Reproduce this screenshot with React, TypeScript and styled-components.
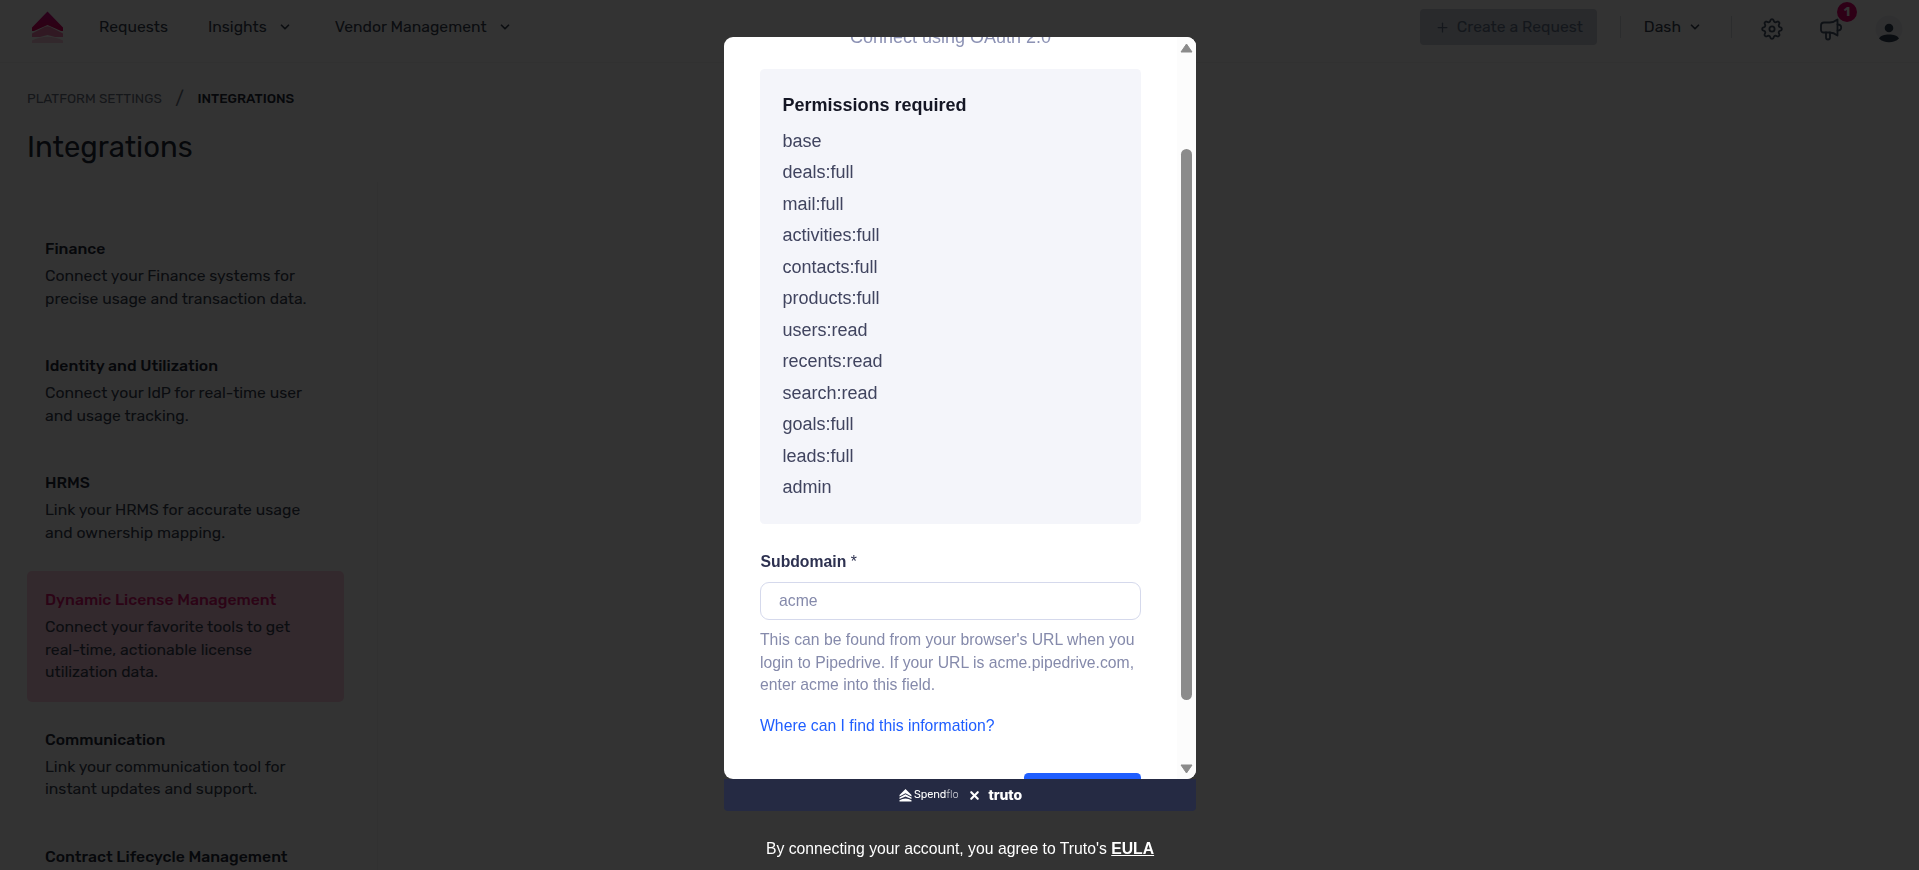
import React from 'react';
import styled, { createGlobalStyle } from 'styled-components';
import { ChevronDown, Plus, X } from 'lucide-react';

const GlobalStyle = createGlobalStyle`
  * {
    box-sizing: border-box;
  }
  body {
    margin: 0;
    background: #fff;
    overflow: hidden;
  }
`;

const Page = styled.div`
  height: 870px;
  overflow: hidden;
  display: flex;
  flex-direction: column;
  font-family: Rubik, Roboto, sans-serif;
  font-size: 15.75px;
  line-height: 22.5px;
  color: #374151;
`;

const TopBar = styled.header`
  flex: none;
  height: 63px;
  padding: 0 16px 8px 31px;
  display: flex;
  align-items: center;
  justify-content: space-between;
  border-bottom: 1px solid #f3f4f6;
`;

const Nav = styled.nav`
  display: flex;
  align-items: center;
`;

const NavItem = styled.div<{ gap: number }>`
  display: flex;
  align-items: center;
  gap: 11px;
  margin-left: ${(props) => props.gap}px;
`;

const Tools = styled.div`
  display: flex;
  align-items: center;
`;

const CreateButton = styled.div`
  display: flex;
  align-items: center;
  gap: 7px;
  width: 177px;
  height: 36px;
  margin-right: 23px;
  padding-left: 15px;
  border-radius: 4px;
  background: #cbd1da;
  color: #64748b;
`;

const Separator = styled.div`
  width: 1px;
  height: 22px;
  background: #d5dae2;
`;

const Workspace = styled.div`
  display: flex;
  align-items: center;
  gap: 7px;
  margin: 0 29px 0 23px;
`;

const ToolIcon = styled.div<{ gap: number }>`
  position: relative;
  display: flex;
  margin-left: ${(props) => props.gap}px;
  padding-top: 4px;
`;

const Badge = styled.span`
  position: absolute;
  left: 18px;
  top: -11px;
  width: 20px;
  height: 20px;
  border-radius: 50%;
  background: #e6006f;
  color: #fff;
  font-size: 13px;
  font-weight: 700;
  line-height: 20px;
  text-align: center;
`;

const Breadcrumb = styled.div`
  display: flex;
  align-items: center;
  gap: 13.5px;
  margin: 24px 0 0 27px;
  font-size: 13.5px;
  color: #6b7280;
  & b {
    font-weight: 500;
    color: #1f2937;
  }
  & i {
    font-style: normal;
    font-size: 18px;
  }
`;

const Title = styled.h1`
  margin: 19px 0 0 27px;
  font-size: 29.25px;
  font-weight: 400;
  line-height: 36px;
  color: #1f2937;
`;

const Sidebar = styled.aside`
  flex: 1;
  width: 378px;
  margin-top: 17.5px;
  padding: 38px 33px 0 27px;
  border-right: 1px solid #f3f4f6;
  display: flex;
  flex-direction: column;
  gap: 9px;
`;

const Category = styled.div<{ $active?: boolean }>`
  flex: none;
  padding: 18px;
  border-radius: 5px;
  background: ${(props) => (props.$active ? '#fccce0' : 'transparent')};
  & h3 {
    margin: 0 0 4.5px;
    font-size: 15.75px;
    font-weight: 500;
    color: ${(props) => (props.$active ? '#dc1470' : '#1f2937')};
  }
  & p {
    margin: 0;
    white-space: pre-line;
  }
`;

const Backdrop = styled.div`
  position: fixed;
  inset: 0;
  padding: 37px 0 0 1px;
  display: flex;
  flex-direction: column;
  align-items: center;
  background: rgba(0, 0, 0, 0.8);
  font-family: 'Liberation Sans', Arial, sans-serif;
  font-size: 15.75px;
  line-height: 22.5px;
`;

const Modal = styled.div`
  width: 472px;
  height: 742px;
  display: flex;
  overflow: hidden;
  border-radius: 9px;
  background: #fff;
`;

const ModalBody = styled.div`
  flex: 1;
  height: 742px;
  padding: 0 36px;
  overflow: hidden;
`;

const Subtitle = styled.div`
  margin: -13px 0 18px;
  font-size: 18px;
  line-height: 27px;
  text-align: center;
  color: #8c92b4;
`;

const Permissions = styled.ul`
  list-style: none;
  margin: 0;
  padding: 22.5px;
  display: flex;
  flex-direction: column;
  gap: 4.5px;
  border-radius: 4.5px;
  background: #f4f5fa;
  font-size: 18px;
  line-height: 27px;
  color: #40445f;
`;

const PermissionsTitle = styled.li`
  margin-bottom: 4.5px;
  font-weight: 700;
  color: #141624;
`;

const Label = styled.div`
  margin: 27px 0 9px;
  padding-left: 0.5px;
  font-weight: 700;
  color: #2d3150;
  & span {
    font-weight: 400;
  }
`;

const Field = styled.div`
  height: 38px;
  padding: 7px 18px;
  border: 1px solid #d5d9ec;
  border-radius: 9px;
  color: #858aab;
`;

const Help = styled.p`
  margin: 9px 0 18px;
  white-space: nowrap;
  color: #858aab;
`;

const HelpLink = styled.a`
  display: block;
  color: #1f5eff;
`;

const Submit = styled.div`
  width: 117px;
  height: 45px;
  margin: 36px 0 0 auto;
  border-radius: 4.5px;
  background: #1f5eff;
`;

const Scrollbar = styled.div`
  width: 19px;
  padding: 6px 0 5px;
  display: flex;
  flex-direction: column;
  align-items: center;
  background: #fcfcfc;
`;

const Thumb = styled.div`
  width: 11px;
  height: 551px;
  margin: 96px 0 auto;
  border-radius: 6px;
  background: #8b8b8b;
`;

const Brands = styled.div`
  width: 472px;
  height: 32px;
  padding-left: 1px;
  display: flex;
  align-items: center;
  justify-content: center;
  border-radius: 0 0 4px 4px;
  background: #252a43;
  color: #fff;
`;

const SpendfloName = styled.span`
  margin: 0 9px 0 2px;
  font-family: Rubik, Lato, sans-serif;
  font-size: 11px;
  letter-spacing: -0.1px;
  & span {
    font-weight: 300;
    opacity: 0.75;
  }
`;

const TrutoName = styled.span`
  margin-left: 8px;
  font-family: Inter, sans-serif;
  font-size: 14px;
  font-weight: 800;
  letter-spacing: -0.1px;
`;

const Terms = styled.div`
  margin-top: 27px;
  color: #fff;
  & a {
    font-weight: 700;
    text-decoration: underline;
  }
`;

const categories = [
  { name: 'Finance', text: 'Connect your Finance systems for\nprecise usage and transaction data.' },
  { name: 'Identity and Utilization', text: 'Connect your IdP for real-time user\nand usage tracking.' },
  { name: 'HRMS', text: 'Link your HRMS for accurate usage\nand ownership mapping.' },
  { name: 'Dynamic License Management', text: 'Connect your favorite tools to get\nreal-time, actionable license\nutilization data.' },
  { name: 'Communication', text: 'Link your communication tool for\ninstant updates and support.' },
  { name: 'Contract Lifecycle Management', text: '' },
];

const permissions = [
  'base', 'deals:full', 'mail:full', 'activities:full', 'contacts:full', 'products:full',
  'users:read', 'recents:read', 'search:read', 'goals:full', 'leads:full', 'admin',
];

function Logo() {
  return (
    <svg width="33" height="33" viewBox="0 0 33 33">
      <defs>
        <linearGradient id="roof" x1="0" y1="0" x2="0" y2="1">
          <stop offset="0" stopColor="#d0108c" />
          <stop offset="1" stopColor="#e6005c" />
        </linearGradient>
      </defs>
      <path d="M16.500 0.500 32 16.500V20H30L16.500 14 3 20H1V16.500Z" fill="url(#roof)" />
      <path d="M1 22.500 14 15.800Q16.500 14.500 19 15.800L32 22.500V26H24L16.500 24 9 26H1Z" fill="#e6005c" opacity=".5" />
      <path d="M1 29.500Q16.500 22 32 29.500V32H1Z" fill="#e6005c" opacity=".22" />
    </svg>
  );
}

// Rounded eight-tooth outline around the centre of a 24px box
const gearPath = Array.from({ length: 96 }, (_, i) => {
  const a = (i / 96) * Math.PI * 2;
  const r = 8.6 + 1.3 * Math.tanh(1.5 * Math.cos(8 * a));
  return `${i ? 'L' : 'M'}${(12 + r * Math.cos(a)).toFixed(2)} ${(12 + r * Math.sin(a)).toFixed(2)}`;
}).join('');

function Gear() {
  return (
    <svg width="24" height="24" viewBox="0 0 24 24" fill="none" stroke="#475569" strokeWidth="1.8" strokeLinejoin="round">
      <path d={`${gearPath}Z`} />
      <circle cx="12" cy="12" r="2.600" />
    </svg>
  );
}

function Megaphone() {
  return (
    <svg width="24" height="24" viewBox="0 0 24 24" fill="none" stroke="#475569" strokeWidth="1.8" strokeLinejoin="round" strokeLinecap="round">
      <path d="M5 5.500h5.500c3 0 5.500-1 8-3v16c-2.500-2-5-3-8-3H4.500a2.500 2.500 0 0 1-2.500-2.500V8.500a3 3 0 0 1 3-3Z" />
      <path d="M18.500 7.500c2.200 0 3.700 1.300 3.700 3s-1.500 3-3.700 3" />
      <path d="M7 15.500V20.500a2 2 0 0 0 4 0v-5" />
    </svg>
  );
}

function Avatar() {
  return (
    <svg width="28" height="28" viewBox="0 0 28 28">
      <circle cx="14" cy="14" r="13.500" fill="#eef1f5" />
      <circle cx="14" cy="13" r="4.300" fill="#334155" />
      <path d="M4 23.500C6 18 22 18 24 23.500 19 28.500 9 28.500 4 23.500Z" fill="#334155" />
    </svg>
  );
}

export default function App() {
  return (
    <>
      <GlobalStyle />
      <Page>
        <TopBar>
          <Nav>
            <Logo />
            <NavItem gap={35}>Requests</NavItem>
            <NavItem gap={40}>
              Insights
              <ChevronDown size={14} strokeWidth={3} />
            </NavItem>
            <NavItem gap={43}>
              Vendor Management
              <ChevronDown size={14} strokeWidth={3} />
            </NavItem>
          </Nav>
          <Tools>
            <CreateButton>
              <Plus size={15} strokeWidth={2} />
              Create a Request
            </CreateButton>
            <Separator />
            <Workspace>
              Dash
              <ChevronDown size={14} strokeWidth={3} />
            </Workspace>
            <Separator />
            <ToolIcon gap={28}><Gear /></ToolIcon>
            <ToolIcon gap={35}>
              <Megaphone />
              <Badge>1</Badge>
            </ToolIcon>
            <ToolIcon gap={32}><Avatar /></ToolIcon>
          </Tools>
        </TopBar>
        <Breadcrumb>
          <span>PLATFORM SETTINGS</span>
          <i>/</i>
          <b>INTEGRATIONS</b>
        </Breadcrumb>
        <Title>Integrations</Title>
        <Sidebar>
          {categories.map((item) => (
            <Category key={item.name} $active={item.name === 'Dynamic License Management'}>
              <h3>{item.name}</h3>
              <p>{item.text}</p>
            </Category>
          ))}
        </Sidebar>
      </Page>
      <Backdrop>
        <Modal>
          <ModalBody>
            <Subtitle>Connect using OAuth 2.0</Subtitle>
            <Permissions>
              <PermissionsTitle>Permissions required</PermissionsTitle>
              {permissions.map((name) => <li key={name}>{name}</li>)}
            </Permissions>
            <Label>
              Subdomain
              {' '}
              <span>*</span>
            </Label>
            <Field>acme</Field>
            <Help>
              This can be found from your browser&apos;s URL when you
              <br />
              login to Pipedrive. If your URL is acme.pipedrive.com,
              <br />
              enter acme into this field.
            </Help>
            <HelpLink>Where can I find this information?</HelpLink>
            <Submit />
          </ModalBody>
          <Scrollbar>
            <svg width="13" height="10" viewBox="0 0 13 10"><path d="M6.500 1 12 9H1Z" fill="#8b8b8b" stroke="#8b8b8b" strokeLinejoin="round" /></svg>
            <Thumb />
            <svg width="13" height="10" viewBox="0 0 13 10"><path d="M6.500 9 12 1H1Z" fill="#8b8b8b" stroke="#8b8b8b" strokeLinejoin="round" /></svg>
          </Scrollbar>
        </Modal>
        <Brands>
          <svg width="13" height="13" viewBox="0 0 13 13" fill="#fff">
            <path d="M6.500 0 12.500 6V7.500L6.500 4.300.5 7.500V6Z" />
            <path d="M6.500 5.200 12.500 8.400V10L6.500 7.600.5 10V8.400Z" />
            <path d="M.5 11.300Q6.500 7.500 12.500 11.300V12.500H.5Z" />
          </svg>
          <SpendfloName>
            Spend
            <span>flo</span>
          </SpendfloName>
          <X size={13} strokeWidth={4} />
          <TrutoName>truto</TrutoName>
        </Brands>
        <Terms>
          By connecting your account, you agree to Truto&apos;s
          {' '}
          <a>EULA</a>
        </Terms>
      </Backdrop>
    </>
  );
}
